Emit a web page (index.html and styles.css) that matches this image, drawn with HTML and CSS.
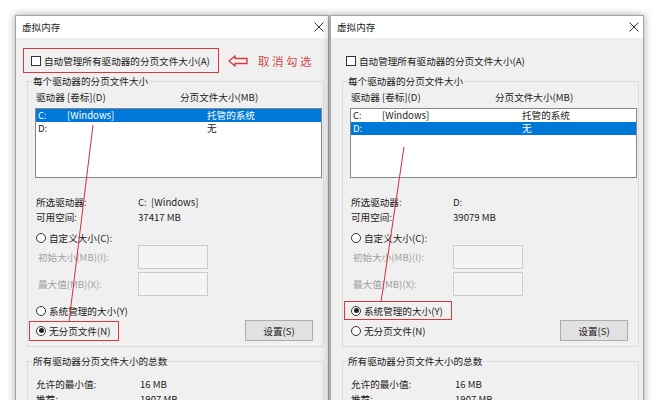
FILE: index.html
```html
<!DOCTYPE html>
<html lang="zh-CN">
<head>
    <meta charset="UTF-8">
    <title>虚拟内存</title>
    <link rel="stylesheet" href="styles.css">
</head>
<body>
<div class="screen">

    <!-- Left dialog: C: selected, no paging file -->
    <div class="dialog">
        <div class="titlebar">
            <span class="title">虚拟内存</span>
            <svg class="close" width="10" height="10" viewBox="0 0 10 10"><path d="M0.5 0.5L9.5 9.5M9.5 0.5L0.5 9.5" stroke="#333" stroke-width="1"/></svg>
        </div>
        <div class="dialog-body">
            <div class="auto-row">
                <div class="auto-check marked">
                    <span class="checkbox"></span>
                    <span>自动管理所有驱动器的分页文件大小(A)</span>
                </div>
                <svg class="hint-arrow" width="20" height="12" viewBox="0 0 20 12"><polygon points="1,6 7,1 7,3.5 19,3.5 19,8.5 7,8.5 7,11" fill="none" stroke="#d23b3f" stroke-width="1.3"/></svg>
                <span class="hint">取消勾选</span>
            </div>

            <fieldset class="group">
                <legend>每个驱动器的分页文件大小</legend>
                <div class="list-head"><span class="col-drive">驱动器 [卷标](D)</span><span>分页文件大小(MB)</span></div>
                <div class="listbox">
                    <div class="list-row selected"><span class="c1">C:</span><span class="c2">[Windows]</span><span>托管的系统</span></div>
                    <div class="list-row"><span class="c1">D:</span><span class="c2"></span><span>无</span></div>
                </div>
                <div class="info">
                    <div class="info-row"><span class="key">所选驱动器:</span><span>C:&nbsp;&nbsp;[Windows]</span></div>
                    <div class="info-row"><span class="key">可用空间:</span><span>37417 MB</span></div>
                </div>
                <div class="radio-row"><span class="radio"></span><span>自定义大小(C):</span></div>
                <div class="size-row"><span class="size-label">初始大小(MB)(I):</span><span class="input"></span></div>
                <div class="size-row second"><span class="size-label">最大值(MB)(X):</span><span class="input"></span></div>
                <div class="radio-row sys"><span class="radio"></span><span>系统管理的大小(Y)</span></div>
                <div class="action-row">
                    <div class="radio-row none marked"><span class="radio on"></span><span>无分页文件(N)</span></div>
                    <button class="btn">设置(S)</button>
                </div>
            </fieldset>

            <fieldset class="group total">
                <legend>所有驱动器分页文件大小的总数</legend>
                <div class="info-row"><span class="key wide">允许的最小值:</span><span>16 MB</span></div>
                <div class="info-row"><span class="key wide">推荐:</span><span>1907 MB</span></div>
            </fieldset>
        </div>
        <svg class="pointer" viewBox="0 0 312 420"><line x1="77" y1="109" x2="53" y2="306" stroke="#d2303a" stroke-width="1"/></svg>
    </div>

    <!-- Right dialog: D: selected, system managed -->
    <div class="dialog">
        <div class="titlebar">
            <span class="title">虚拟内存</span>
            <svg class="close" width="10" height="10" viewBox="0 0 10 10"><path d="M0.5 0.5L9.5 9.5M9.5 0.5L0.5 9.5" stroke="#333" stroke-width="1"/></svg>
        </div>
        <div class="dialog-body">
            <div class="auto-row">
                <div class="auto-check">
                    <span class="checkbox"></span>
                    <span>自动管理所有驱动器的分页文件大小(A)</span>
                </div>
            </div>

            <fieldset class="group">
                <legend>每个驱动器的分页文件大小</legend>
                <div class="list-head"><span class="col-drive">驱动器 [卷标](D)</span><span>分页文件大小(MB)</span></div>
                <div class="listbox">
                    <div class="list-row"><span class="c1">C:</span><span class="c2">[Windows]</span><span>托管的系统</span></div>
                    <div class="list-row selected"><span class="c1">D:</span><span class="c2"></span><span>无</span></div>
                </div>
                <div class="info">
                    <div class="info-row"><span class="key">所选驱动器:</span><span>D:</span></div>
                    <div class="info-row"><span class="key">可用空间:</span><span>39079 MB</span></div>
                </div>
                <div class="radio-row"><span class="radio"></span><span>自定义大小(C):</span></div>
                <div class="size-row"><span class="size-label">初始大小(MB)(I):</span><span class="input"></span></div>
                <div class="size-row second"><span class="size-label">最大值(MB)(X):</span><span class="input"></span></div>
                <div class="radio-row sys marked"><span class="radio on"></span><span>系统管理的大小(Y)</span></div>
                <div class="action-row">
                    <div class="radio-row none"><span class="radio"></span><span>无分页文件(N)</span></div>
                    <button class="btn">设置(S)</button>
                </div>
            </fieldset>

            <fieldset class="group total">
                <legend>所有驱动器分页文件大小的总数</legend>
                <div class="info-row"><span class="key wide">允许的最小值:</span><span>16 MB</span></div>
                <div class="info-row"><span class="key wide">推荐:</span><span>1907 MB</span></div>
            </fieldset>
        </div>
        <svg class="pointer" viewBox="0 0 312 420"><line x1="73" y1="131" x2="50" y2="286" stroke="#d2303a" stroke-width="1"/></svg>
    </div>

</div>
</body>
</html>
```

FILE: styles.css
```css
* {
    margin: 0;
    padding: 0;
    box-sizing: border-box;
}

body {
    width: 659px;
    height: 400px;
    overflow: hidden;
    background: #fff;
    font-family: "Noto Sans CJK SC", "Noto Sans", sans-serif;
    font-size: 9.6px;
    color: #1b1b1b;
}

.screen {
    display: flex;
    gap: 1px;
    padding: 15px 0 0 15px;
    height: 400px;
}

/* Dialog frame */
.dialog {
    position: relative;
    width: 314px;
    height: 430px;
    flex-shrink: 0;
    background: #f0f0f0;
    border: 1px solid #a4a4a4;
    box-shadow: 0 0 8px rgba(0, 0, 0, 0.35);
}

.titlebar {
    height: 22px;
    background: #fff;
    display: flex;
    align-items: center;
    justify-content: space-between;
    padding: 0 4px 0 6px;
    line-height: 12px;
}

.close {
    display: block;
}

.dialog-body {
    padding: 10px 4px 0 7px;
}

/* Red annotation boxes */
.marked {
    border-color: #d8383b !important;
}

.auto-row {
    display: flex;
    align-items: center;
    height: 25px;
}

.auto-check {
    width: 196px;
    height: 25px;
    display: flex;
    align-items: center;
    gap: 3px;
    padding-left: 7px;
    border: 1px solid transparent;
    line-height: 12px;
}

.checkbox {
    width: 10px;
    height: 10px;
    background: #fff;
    border: 1px solid #333;
    flex-shrink: 0;
}

.hint-arrow {
    margin-left: 9px;
    display: block;
}

.hint {
    margin-left: 10px;
    font-size: 11.5px;
    letter-spacing: 2.5px;
    color: #cf4a4c;
    line-height: 14px;
}

/* Group boxes */
.group {
    margin: 2px 0 0 4px;
    border: 1px solid #dcdcdc;
    padding: 4px 1px 5px 7px;
    min-width: 0;
}

.group legend {
    line-height: 12px;
    padding: 0 1px;
    margin-left: -3px;
}

.list-head {
    display: flex;
    line-height: 13px;
    padding-left: 1px;
}

.col-drive {
    width: 144px;
}

.listbox {
    margin-top: 4px;
    height: 70px;
    background: #fff;
    border: 1px solid #828790;
}

.list-row {
    display: flex;
    height: 13px;
    line-height: 13px;
    padding-left: 2px;
}

.list-row.selected {
    background: #0078d7;
    color: #fff;
}

.c1 {
    width: 29px;
}

.c2 {
    width: 140px;
}

.info {
    margin-top: 17px;
}

.info-row {
    display: flex;
    line-height: 15px;
    padding-left: 1px;
}

.key {
    width: 102px;
}

.key.wide {
    width: 104px;
}

/* Radio buttons */
.radio-row {
    display: flex;
    align-items: center;
    gap: 3px;
    margin-top: 6px;
    height: 14px;
    padding-left: 1px;
    line-height: 12px;
}

.radio {
    width: 10px;
    height: 10px;
    border-radius: 50%;
    border: 1px solid #333;
    background: #fff;
    flex-shrink: 0;
    display: flex;
    align-items: center;
    justify-content: center;
}

.radio.on::after {
    content: "";
    width: 5px;
    height: 5px;
    border-radius: 50%;
    background: #222;
}

.radio-row.sys {
    margin: 5px 0 0 -6px;
    width: 108px;
    height: 19px;
    padding-left: 6px;
    border: 1px solid transparent;
}

.size-row {
    display: flex;
    align-items: center;
    height: 24px;
    color: #a0a0a0;
}

.size-row.second {
    margin-top: 3px;
}

.size-label {
    width: 103px;
    padding-left: 3px;
}

.input {
    width: 70px;
    height: 24px;
    background: #f4f4f4;
    border: 1px solid #cccccc;
}

.action-row {
    display: flex;
    align-items: center;
    justify-content: space-between;
    height: 21px;
    padding-right: 9px;
}

.radio-row.none {
    margin: 0 0 0 -6px;
    width: 90px;
    height: 20px;
    padding-left: 6px;
    border: 1px solid transparent;
}

.btn {
    width: 68px;
    height: 21px;
    background: #e1e1e1;
    border: 1px solid #adadad;
    font-family: inherit;
    font-size: 9.6px;
    color: #1b1b1b;
    line-height: 12px;
}

.group.total {
    margin-top: 8px;
    padding-top: 10px;
}

/* Red pointer lines drawn over the dialog */
.pointer {
    position: absolute;
    left: 0;
    top: 0;
    width: 312px;
    height: 420px;
    pointer-events: none;
}
```
